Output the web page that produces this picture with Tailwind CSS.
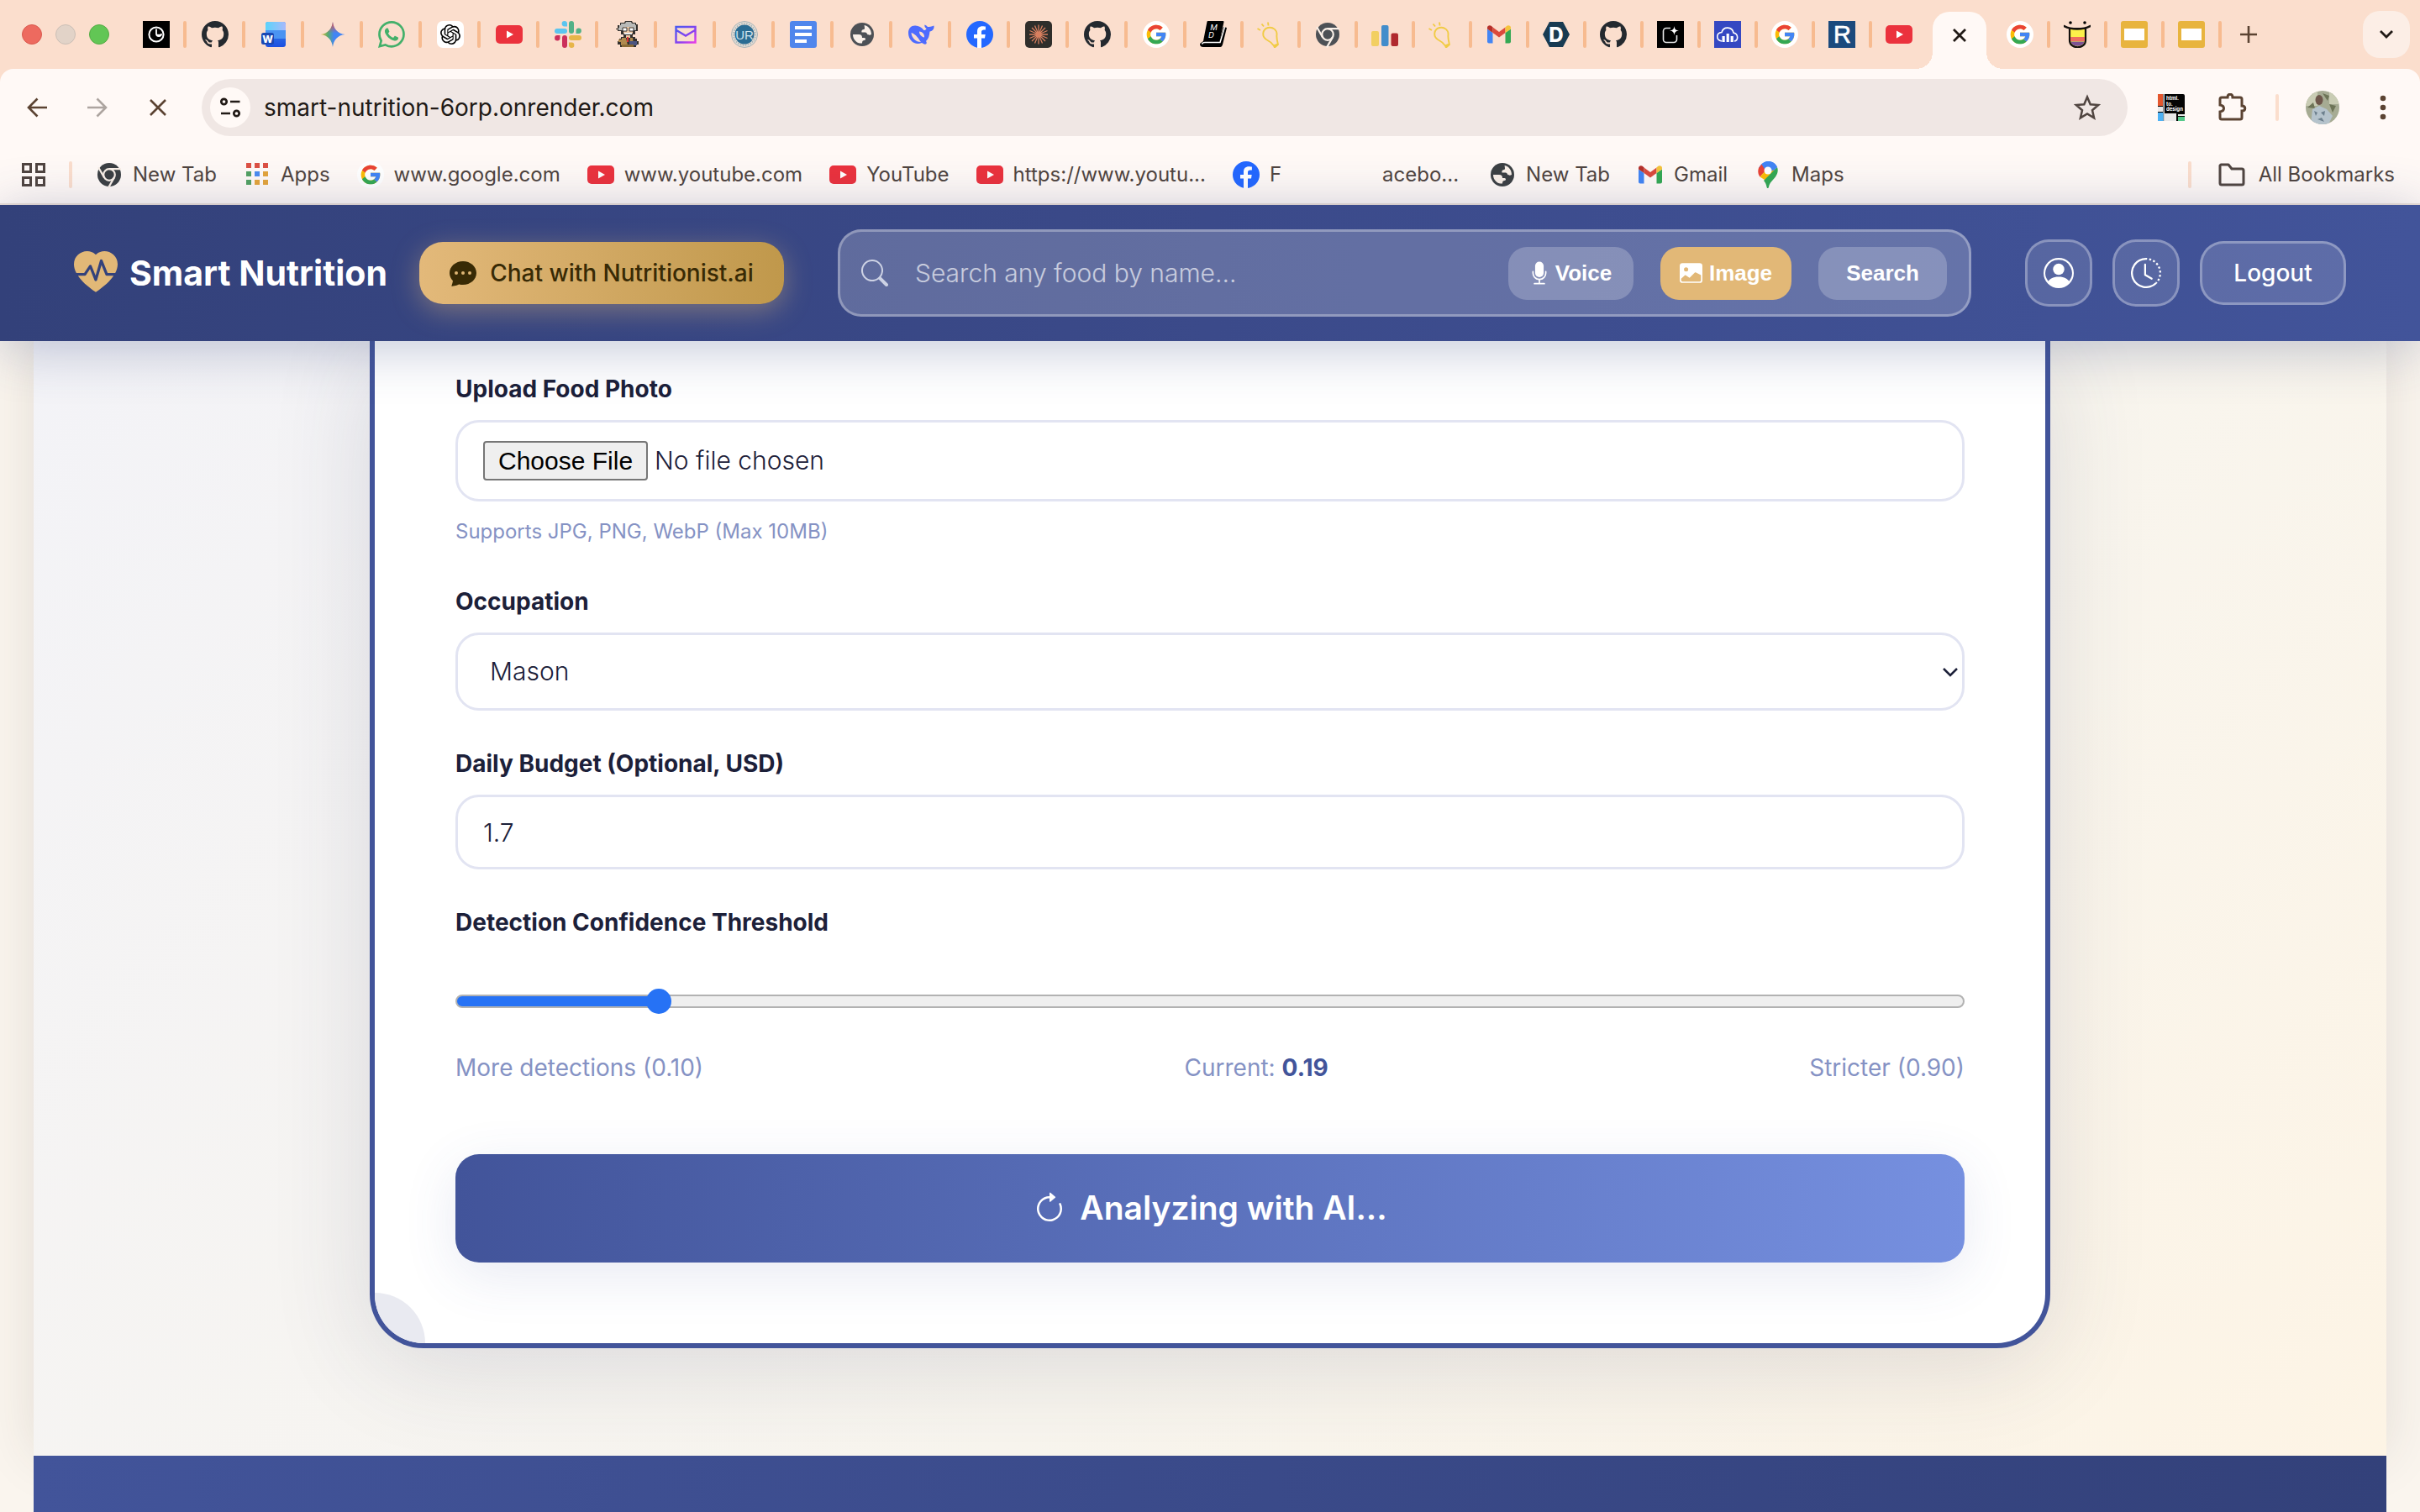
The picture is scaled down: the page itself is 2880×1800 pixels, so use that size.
<!DOCTYPE html>
<html lang="en">
  <head>
    <meta charset="UTF-8" />
    <meta name="viewport" content="width=device-width, initial-scale=1.0" />
    <title>Smart Nutrition</title>
    <script src="https://cdn.jsdelivr.net/npm/@tailwindcss/browser@4"></script>
  </head>
  <body class="flex h-screen flex-col overflow-hidden bg-[#faf5ee] font-[Inter,sans-serif] text-[#1c2039]">
    <!-- Gradients stay in a rendered svg, display:none would switch them off -->
    <svg class="absolute size-0" aria-hidden="true">
      <linearGradient id="g-word" x1="0" y1="0" x2="1" y2="0"><stop offset="0" stop-color="#5ad4fb" /><stop offset="1" stop-color="#a8b9fb" /></linearGradient>
      <linearGradient id="g-word2" x1="0" y1="0" x2="0" y2="1"><stop offset="0" stop-color="#3b8ef0" /><stop offset="1" stop-color="#1c4fe0" /></linearGradient>
      <linearGradient id="g-gem" x1="0" y1=".5" x2="1" y2=".5"><stop offset="0" stop-color="#f0b93a" /><stop offset=".3" stop-color="#58ab6e" /><stop offset=".55" stop-color="#4285f4" /><stop offset="1" stop-color="#4285f4" /></linearGradient>
      <linearGradient id="g-gem2" x1="0" y1="0" x2="0" y2="1"><stop offset="0" stop-color="#ea4b44" /><stop offset=".45" stop-color="#ea4b44" stop-opacity="0" /></linearGradient>
      <linearGradient id="g-mail" x1="0" y1="0" x2="1" y2="1"><stop offset="0" stop-color="#4a5af0" /><stop offset=".6" stop-color="#8a3ff0" /><stop offset="1" stop-color="#e83ce8" /></linearGradient>
    </svg>

    <!-- Icons -->
    <svg class="hidden" aria-hidden="true">
      <symbol id="clock" viewBox="0 0 32 32"><path d="M0 0h32v32H0z" fill="#000" /><circle cx="16" cy="16" r="8.6" fill="none" stroke="#fff" stroke-width="2" /><path d="M16 9.5V15a3 3 0 0 0 6 0" fill="none" stroke="#fff" stroke-width="1.8" /><path d="M16 16.5h5" stroke="#fff" stroke-width="1.4" /></symbol>
      <symbol id="github" viewBox="0 0 16 16"><path fill="#24292f" d="M8 0C3.58 0 0 3.58 0 8c0 3.54 2.29 6.53 5.47 7.59.4.07.55-.17.55-.38 0-.19-.01-.82-.01-1.49-2.01.37-2.53-.49-2.69-.94-.09-.23-.48-.94-.82-1.13-.28-.15-.68-.52-.01-.53.63-.01 1.08.58 1.23.82.72 1.21 1.87.87 2.33.66.07-.52.28-.87.51-1.07-1.78-.2-3.64-.89-3.64-3.95 0-.87.31-1.59.82-2.15-.08-.2-.36-1.02.08-2.12 0 0 .67-.21 2.2.82.64-.18 1.32-.27 2-.27.68 0 1.36.09 2 .27 1.53-1.04 2.2-.82 2.2-.82.44 1.1.16 1.92.08 2.12.51.56.82 1.27.82 2.15 0 3.07-1.87 3.75-3.65 3.95.29.25.54.73.54 1.48 0 1.07-.01 1.93-.01 2.2 0 .21.15.46.55.38A8.013 8.013 0 0 0 16 8c0-4.42-3.58-8-8-8z" /></symbol>
      <symbol id="word" viewBox="0 0 32 32"><rect x="6" y="1" width="24" height="30" rx="3" fill="url(#g-word2)" /><path d="M9 1h18a3 3 0 0 1 3 3v7H6V4a3 3 0 0 1 3-3z" fill="url(#g-word)" /><path d="M6 11h24v10H6z" fill="#4a93f2" /><rect x="1" y="14" width="15" height="14" rx="2.5" fill="#1a48b4" /><text x="8.5" y="25.5" font-family="Inter,sans-serif" font-size="12" font-weight="800" fill="#fff" text-anchor="middle">W</text></symbol>
      <symbol id="gemini" viewBox="0 0 32 32"><path fill="url(#g-gem)" d="M16 1c1 8.500 6 14 14.500 15C22 17 17 22.500 16 31 15 22.500 10 17 1.500 16 10 15 15 9.500 16 1z" /><path fill="url(#g-gem2)" d="M16 1c1 8.500 6 14 14.500 15C22 17 17 22.500 16 31 15 22.500 10 17 1.500 16 10 15 15 9.500 16 1z" /></symbol>
      <symbol id="whatsapp" viewBox="0 0 16 16"><path fill="#43b06a" d="M13.601 2.326A7.85 7.85 0 0 0 7.994 0C3.627 0 .068 3.558.064 7.926c0 1.399.366 2.760 1.057 3.965L0 16l4.204-1.102a7.900 7.900 0 0 0 3.790.965h.004c4.368 0 7.926-3.558 7.930-7.930A7.900 7.900 0 0 0 13.600 2.326zM7.994 14.521a6.600 6.600 0 0 1-3.356-.920l-.240-.144-2.494.654.666-2.433-.156-.251a6.560 6.560 0 0 1-1.007-3.505c0-3.626 2.957-6.584 6.591-6.584a6.560 6.560 0 0 1 4.660 1.931 6.560 6.560 0 0 1 1.928 4.660c-.004 3.639-2.961 6.592-6.592 6.592m3.615-4.934c-.197-.099-1.170-.578-1.353-.646-.182-.065-.315-.099-.445.099-.133.197-.513.646-.627.775-.114.133-.232.148-.430.050-.197-.100-.836-.308-1.592-.985-.590-.525-.985-1.175-1.103-1.372-.114-.198-.011-.304.088-.403.087-.088.197-.232.296-.346.100-.114.133-.198.198-.330.065-.134.034-.248-.015-.347-.050-.099-.445-1.076-.612-1.470-.160-.389-.323-.335-.445-.340-.114-.007-.247-.007-.380-.007a.730.730 0 0 0-.529.247c-.182.198-.691.677-.691 1.654s.710 1.916.810 2.049c.098.133 1.394 2.132 3.383 2.992.470.205.840.326 1.129.418.475.152.904.129 1.246.080.380-.058 1.171-.480 1.338-.943.164-.464.164-.860.114-.943-.049-.084-.182-.133-.380-.232" /></symbol>
      <symbol id="openai" viewBox="0 0 32 32"><rect width="32" height="32" rx="7" fill="#fff" /><g transform="translate(4 4)"><path d="M22.2819 9.8211a5.9847 5.9847 0 0 0-.5157-4.9108 6.0462 6.0462 0 0 0-6.5098-2.9A6.0651 6.0651 0 0 0 4.9807 4.1818a5.9847 5.9847 0 0 0-3.9977 2.9 6.0462 6.0462 0 0 0 .7427 7.0966 5.98 5.98 0 0 0 .511 4.9107 6.051 6.051 0 0 0 6.5146 2.9001A5.9847 5.9847 0 0 0 13.2599 24a6.0557 6.0557 0 0 0 5.7718-4.2058 5.9894 5.9894 0 0 0 3.9977-2.9001 6.0557 6.0557 0 0 0-.7475-7.0729zm-9.022 12.6081a4.4755 4.4755 0 0 1-2.8764-1.0408l.1419-.0804 4.7783-2.7582a.7948.7948 0 0 0 .3927-.6813v-6.7369l2.02 1.1686a.071.071 0 0 1 .038.052v5.5826a4.504 4.504 0 0 1-4.4945 4.4944zm-9.6607-4.1254a4.4708 4.4708 0 0 1-.5346-3.0137l.142.0852 4.783 2.7582a.7712.7712 0 0 0 .7806 0l5.8428-3.3685v2.3324a.0804.0804 0 0 1-.0332.0615L9.74 19.9502a4.4992 4.4992 0 0 1-6.1408-1.6464zM2.3408 7.8956a4.485 4.485 0 0 1 2.3655-1.9728V11.6a.7664.7664 0 0 0 .3879.6765l5.8144 3.3543-2.0201 1.1685a.0757.0757 0 0 1-.071 0l-4.8303-2.7865A4.504 4.504 0 0 1 2.3408 7.872zm16.5963 3.8558L13.1038 8.364 15.1192 7.2a.0757.0757 0 0 1 .071 0l4.8303 2.7913a4.4944 4.4944 0 0 1-.6765 8.1042v-5.6772a.79.79 0 0 0-.407-.667zm2.0107-3.0231l-.142-.0852-4.7735-2.7818a.7759.7759 0 0 0-.7854 0L9.409 9.2297V6.8974a.0662.0662 0 0 1 .0284-.0615l4.8303-2.7866a4.4992 4.4992 0 0 1 6.6802 4.66zM8.3065 12.863l-2.02-1.1638a.0804.0804 0 0 1-.038-.0567V6.0742a4.4992 4.4992 0 0 1 7.3757-3.4537l-.142.0805L8.704 5.459a.7948.7948 0 0 0-.3927.6813zm1.0976-2.3654l2.602-1.4998 2.6069 1.4998v2.9994l-2.5974 1.4997-2.6067-1.4997Z" /></g></symbol>
      <symbol id="youtube" viewBox="0 0 32 32"><rect y="5" width="32" height="22" rx="5" fill="#eb323d" /><path d="M13 11.500v9l8-4.500z" fill="#fff" /></symbol>
      <symbol id="slack" viewBox="0 0 32 32"><g fill="#5bc5ef"><rect y="9" width="15" height="6" rx="3" /><path d="M15 6.500h-3a3.200 3.200 0 1 1 3-3z" /></g><g fill="#52b187"><rect x="17" width="6" height="15" rx="3" /><path d="M25.500 15v-3a3.200 3.200 0 1 1 3 3z" /></g><g fill="#e7b549"><rect x="17" y="17" width="15" height="6" rx="3" /><path d="M17 25.500h3a3.200 3.200 0 1 1-3 3z" /></g><g fill="#cb2f5b"><rect x="9" y="17" width="6" height="15" rx="3" /><path d="M6.500 17v3a3.200 3.200 0 1 1-3-3z" /></g></symbol>
      <symbol id="professor" viewBox="0 0 32 32"><path d="M8 2h5l1-2h8l1 2h4v2h2v8h-3v4h-3v3h3v2h2v3h2v4h-3v3H8v-3H5v-4h2v-3h2v-2h3v-3H9v-4H5v-2H3V9h2V5h3z" fill="#33302d" /><path d="M9 3h5l1-2h6l1 2h4v2h1v6h-3l-1-3H12l-1 3H6V8h1V5h2z" fill="#b9bab8" /><path d="M12 7h11v8H12z" fill="#efc9a4" /><path d="M11 8h5v4h-5zm8 0h5v4h-5z" fill="#fff" stroke="#333" stroke-width="1" /><path d="M13 14h9v2h-9z" fill="#eee" /><path d="M15 17h5v3h-5z" fill="#efc9a4" /><path d="M10 20h5l2 9h-8v-4H6v-3h4z" fill="#b08a4e" /><path d="M20 20h3l1 9h-5z" fill="#b08a4e" /><path d="M16 19h2v6h-2z" fill="#d33" /><path d="M19 24h9v5h-9z" fill="#4c5580" /><path d="M10 28h14v3H10z" fill="#8a6b35" /></symbol>
      <symbol id="mail" viewBox="0 0 32 32"><path d="M4.500 7h23v18.500h-23zM5 11l11 6.500L27 11" fill="none" stroke="url(#g-mail)" stroke-width="2.400" /></symbol>
      <symbol id="university" viewBox="0 0 32 32"><circle cx="16" cy="16" r="15.500" fill="#e6ddd3" stroke="#a9b4b8" stroke-width="1" /><circle cx="16" cy="16" r="13" fill="none" stroke="#9fb0b8" stroke-width="1.500" stroke-dasharray="1.500 1.500" /><circle cx="16" cy="16" r="11.500" fill="#2a6c93" /><text x="16" y="21.500" font-family="Liberation Sans,sans-serif" font-size="15" fill="#cfe2ec" text-anchor="middle">UR</text></symbol>
      <symbol id="docs" viewBox="0 0 32 32"><rect width="32" height="32" rx="3" fill="#5086ec" /><path d="M6 6h20v4H6zm0 8h20v4H6zm0 8h14v4H6z" fill="#fff" /></symbol>
      <symbol id="globe" viewBox="0 0 32 32"><circle cx="16" cy="16" r="14" fill="currentColor" /><path class="fill-[#faf0e8]" d="M18 5c5 .5 9 5 9 11-1.500 1-4 1-5-.5-.5-1.500-1.500-2-3-2h-3.500c-.5-2 .5-3.500 2.500-3.500 1.500-.5 1-2 .5-5zM5 16h7c3 0 4 1.500 4 4h2.500c2 0 2 3 0 3-1.500 0-2.500.5-2.500 3.500C9.500 27 5 22 5 16z" /></symbol>
      <symbol id="whale" viewBox="0 0 32 32"><path d="M1 14C1 8.500 5 5 9.500 5.500c4 .5 7 1.500 10 5.500 1.500 0 2.500-.5 3-2-2-1.500-2.500-3-2-4.500 1.500.5 2.500 1.500 3.500 2.500 2 0 4.500-.5 7.500-1.500.5 4-1.500 6.500-5 7-.5 5-1.500 9-4.500 11.500 1 1.500 1 2.500 0 3.500-2 .5-3.500-.5-5-1.500C9 29.500 1 23.500 1 14z" fill="#4d6bfe" /><path d="M4.500 14c3 1 5 2.500 7 5 2 2 3 4.500 4.500 6C9.500 25 5 20 4.500 14zM14 12.500c3.500 0 6.500 3 6 7-3-.5-6-3-6-7z" fill="#fbdecd" /></symbol>
      <symbol id="facebook" viewBox="0 0 32 32"><circle cx="16" cy="16" r="16" fill="#2468ff" /><path d="m22 20.500.7-4.500H18v-3c0-1.300.9-2.500 2.900-2.500h2V6.600s-2-.3-3.700-.3c-3.800 0-6.200 2.200-6.200 6.200V16H9v4.500h4V32h5V20.500z" fill="#fff" /></symbol>
      <symbol id="burst" viewBox="0 0 32 32"><rect width="32" height="32" rx="5" fill="#2f2e2b" /><path d="M16 4.500v23M5 16h22M8 8l16 16M24 8 8 24M11.500 5.500l9 21M20.500 5.500l-9 21M5.500 11.500l21 9M5.500 20.500l21-9" stroke="#d97f5f" stroke-width="1.300" /></symbol>
      <symbol id="google" viewBox="0 0 48 48"><circle cx="24" cy="24" r="24" fill="#fff" /><g transform="translate(3.600 3.600) scale(.85)"><path fill="#fbbc05" d="M43.611 20.083H42V20H24v8h11.303c-1.649 4.657-6.080 8-11.303 8-6.627 0-12-5.373-12-12s5.373-12 12-12c3.059 0 5.842 1.154 7.961 3.039l5.657-5.657C34.046 6.053 29.268 4 24 4 12.955 4 4 12.955 4 24s8.955 20 20 20 20-8.955 20-20c0-1.341-.138-2.650-.389-3.917z" /><path fill="#ea4335" d="m6.306 14.691 6.571 4.819C14.655 15.108 18.961 12 24 12c3.059 0 5.842 1.154 7.961 3.039l5.657-5.657C34.046 6.053 29.268 4 24 4 16.318 4 9.656 8.337 6.306 14.691z" /><path fill="#34a853" d="M24 44c5.166 0 9.860-1.977 13.409-5.192l-6.190-5.238C29.211 35.091 26.715 36 24 36c-5.202 0-9.619-3.317-11.283-7.946l-6.522 5.025C9.505 39.556 16.227 44 24 44z" /><path fill="#4285f4" d="M43.611 20.083H42V20H24v8h11.303a12.040 12.040 0 0 1-4.087 5.571l6.193 5.236C36.971 39.205 44 34 44 24c0-1.341-.138-2.650-.389-3.917z" /></g></symbol>
      <symbol id="mdbook" viewBox="0 0 32 32"><path d="M9.500 1H27.500L22.500 24H5z" fill="#000" stroke="#000" stroke-width="2" stroke-linejoin="round" /><path d="M28 7l4 1-5 20c-.5 1.500-1 3-3 3H4c-3 0-4-1.500-4-4l4-3h19z" fill="#000" /><path d="M2.500 27.500c.5-2 2-2 3.500-2h18L29.500 7" fill="none" stroke="#fff" stroke-width="1.500" /><text x="16.500" y="11" font-family="Inter,sans-serif" font-size="9.500" font-style="italic" fill="#fff" text-anchor="middle">M</text><text x="13.500" y="20" font-family="Inter,sans-serif" font-size="9.500" font-style="italic" fill="#fff" text-anchor="middle">D</text></symbol>
      <symbol id="bulb" viewBox="0 0 32 32"><path d="M20 28.500c-3-4-6-6-9-7.500-5.500-3.500-5-12 2-14 6-1.500 11 3 10.500 8.500-.5 4 .5 7.500 1.500 11.500l-4 3.500zM20 28.500l5-2M4 10 .5 8M8 5.500 5.500 2.500M13.500 4.500 13 .5" transform="translate(0 1)" fill="none" stroke="#f1cb45" stroke-width="1.900" stroke-linejoin="round" /></symbol>
      <symbol id="chrome" viewBox="0 0 32 32"><circle cx="16" cy="16" r="14" fill="currentColor" /><g class="stroke-[#faf0e8]" fill="none" stroke-width="2.200"><circle cx="16" cy="16" r="6.800" /><path d="M16 9.200h14M10.100 19.400l-7-12.200M21.900 19.400l-7 12.200" /></g></symbol>
      <symbol id="bars" viewBox="0 0 32 32"><rect y="12" width="9" height="18" rx="2" fill="#f2cf62" /><rect x="12" y="5" width="8.500" height="25" rx="2" fill="#428dcb" /><rect x="23.500" y="14.500" width="8.500" height="15.500" rx="2" fill="#b0292e" /></symbol>
      <symbol id="gmail" viewBox="0 0 32 32"><path fill="#4285f4" d="M2 9.500 8.500 14v12.500H4a2 2 0 0 1-2-2z" /><path fill="#34a853" d="M30 9.500 23.500 14v12.500H28a2 2 0 0 0 2-2z" /><path fill="#db4a3c" d="M8.500 7.500 16 13l7.500-5.500V14L16 19.500 8.500 14z" /><path fill="#b5302a" d="M2 8c0-2.500 3-3.500 5-2l1.500 1.500V14L2 9.500z" /><path fill="#f5c33b" d="M30 8c0-2.500-3-3.500-5-2l-1.500 1.500V14L30 9.500z" /></symbol>
      <symbol id="dhex" viewBox="0 0 32 32"><path d="M8 1h16l8 15-8 15H8L0 16z" fill="#183b52" /><text x="16" y="25" font-family="Inter,sans-serif" font-size="24" font-weight="800" fill="#fff" text-anchor="middle">D</text></symbol>
      <symbol id="sparkbox" viewBox="0 0 32 32"><path d="M0 0h32v32H0z" fill="#000" /><path d="M16 8.500h-5A3.500 3.500 0 0 0 7.500 12v10a3.500 3.500 0 0 0 3.500 3.500h9a3.500 3.500 0 0 0 3.500-3.500v-5" fill="none" stroke="#e8e8e8" stroke-width="1.600" /><path d="M20.500 6c.5 3.500 1.500 5 5.500 5.500-4 .5-5 2-5.500 5.500-.5-3.500-1.500-5-5.500-5.500 4-.5 5-2 5.500-5.500z" fill="#fff" /></symbol>
      <symbol id="cloud" viewBox="0 0 32 32"><path d="M0 0h32v32H0z" fill="#3548c2" /><path d="M9 24c-7-1-7-10 0-10.500C11 6 21.500 6.500 23 14c6 1.500 6 9 1 10" fill="none" stroke="#fff" stroke-width="1.600" /><path d="M9.500 18h3.200v7H9.500zm5.100-3h3.200v10h-3.200zm5 3h3.200v7h-3.200z" fill="#fff" /></symbol>
      <symbol id="rbox" viewBox="0 0 32 32"><path d="M0 0h32v32H0z" fill="#1b4a7d" /><text x="16.500" y="26" font-family="Liberation Sans,sans-serif" font-size="29" fill="#fff" stroke="#fff" stroke-width=".6" text-anchor="middle">R</text></symbol>
      <symbol id="tongue" viewBox="0 0 32 32"><circle cx="8" cy="2" r="1.800" /><circle cx="25" cy="2" r="1.800" /><path d="M7 9h19v14c0 11-19 11-19 0z" fill="#fdf04a" stroke="#14110f" stroke-width="2.200" /><path d="M8 19h17v5H8z" fill="#ee6d60" /><path d="M8.500 24.500h16c-1 7-15 7-16 0z" fill="#7c5294" /><path d="M.5 6C9 10.500 23 10.500 31.500 6" fill="none" stroke="#14110f" stroke-width="2.500" stroke-linecap="round" /></symbol>
      <symbol id="slides" viewBox="0 0 32 32"><rect width="32" height="32" rx="3" fill="#e8b43e" /><path d="M4 9h24v14H4z" fill="#fff" /></symbol>
      <symbol id="appgrid" viewBox="0 0 32 32"><path d="M3 2h6v6H3zm10 0h6v6h-6zm10 0h6v6h-6z" fill="#dd5144" /><path d="M3 12h6v6H3zm0 10h6v6H3z" fill="#53a163" /><path d="M13 12h6v6h-6z" fill="#4b8cf0" /><path d="M23 12h6v6h-6zm0 10h6v6h-6zm-10 0h6v6h-6z" fill="#e3a43b" /></symbol>
      <symbol id="maps" viewBox="0 0 32 32"><path d="M5 8C8 2 13 0 16 0c5 0 9 2.500 11 7l-11 12z" fill="#4285f4" /><path d="M5 8c-1.500 4-.5 8 1.500 10.500L16 8 8.500 3.500z" fill="#ea4335" /><path d="M6.500 18.500 20 3l4 12-9 9z" fill="#fbbc05" /><path d="M27 7c1.500 4 .5 8-2 11.500-4 5-7 7-8 12-.5 2-2 2-2.500 0-.5-3-1.500-5-3.500-7.500z" fill="#34a853" /><path d="M8.500 3.500C11 1 14 0 16 0c5 0 9 2.500 11 7l-7 5-7-1z" fill="#4285f4" /><circle cx="16" cy="11" r="4.500" fill="#fff" /></symbol>
    </svg>

    <!-- Tab strip -->
    <div class="flex h-[82px] shrink-0 items-center bg-[#fbdecd]">
      <div class="mr-[22px] ml-[26px] flex shrink-0 gap-4">
        <span class="size-6 rounded-full border border-[#d9594e] bg-[#ed6a5f]"></span>
        <span class="size-6 rounded-full border border-[#cbbfb6] bg-[#e2d3c8]"></span>
        <span class="size-6 rounded-full border border-[#55ab45] bg-[#62c655]"></span>
      </div>
      <div id="tabs-left" class="flex shrink-0"></div>
      <div class="relative ml-1 flex h-[68px] w-16 shrink-0 items-center justify-center self-end rounded-t-[20px] bg-[#fff9f6]">
        <span class="absolute bottom-0 -left-5 size-5 bg-[radial-gradient(circle_at_0_0,transparent_20px,#fff9f6_20px)]"></span>
        <span class="absolute -right-5 bottom-0 size-5 bg-[radial-gradient(circle_at_100%_0,transparent_20px,#fff9f6_20px)]"></span>
        <button aria-label="Close tab" class="pb-3">
          <svg class="size-4" viewBox="0 0 16 16" fill="none" stroke="#211a16" stroke-width="2.800"><path d="m1 1 14 14M15 1 1 15" /></svg>
        </button>
      </div>
      <div id="tabs-right" class="ml-2 flex shrink-0"></div>
      <button aria-label="New tab" class="flex w-16 shrink-0 justify-center">
        <svg class="size-5" viewBox="0 0 20 20" stroke="#5b4332" stroke-width="2.600"><path d="M10 0v20M0 10h20" /></svg>
      </button>
      <button aria-label="Search tabs" class="mr-3 ml-auto flex size-14 items-center justify-center rounded-[20px] bg-[#fceee6]">
        <svg class="size-4" viewBox="0 0 16 16" fill="none" stroke="#211a16" stroke-width="2.800"><path d="m1 4 7 7 7-7" /></svg>
      </button>
    </div>

    <!-- Toolbar -->
    <div class="shrink-0 bg-[#fbdecd]">
      <div class="flex h-[92px] items-center rounded-t-2xl bg-[#fff9f6] pl-2">
        <button aria-label="Back" class="flex w-[72px] shrink-0 justify-center"><svg class="size-6" viewBox="0 0 24 24" fill="none" stroke="#5b4332" stroke-width="2.600"><path d="M24 12H2M12.500 1.500 2 12l10.500 10.500" /></svg></button>
        <button aria-label="Forward" class="flex w-[72px] shrink-0 justify-center"><svg class="size-6" viewBox="0 0 24 24" fill="none" stroke="#ada5a0" stroke-width="2.600"><path d="M0 12h22M11.500 1.500 22 12 11.500 22.500" /></svg></button>
        <button aria-label="Stop" class="flex w-[72px] shrink-0 justify-center"><svg class="size-5" viewBox="0 0 20 20" fill="none" stroke="#5b4332" stroke-width="2.600"><path d="m1 1 18 18M19 1 1 19" /></svg></button>
        <div class="ml-4 flex h-[68px] min-w-0 flex-1 items-center rounded-full bg-[#f0e7e4] pr-8 pl-[10px]">
          <span class="mr-4 flex size-12 shrink-0 items-center justify-center rounded-full bg-[#fff9f6]">
            <svg class="size-6" viewBox="0 0 24 24" fill="none" stroke="#211a16" stroke-width="2.700"><circle cx="4.500" cy="5" r="3.200" /><path d="M12 5h11.500M1 19h11" /><circle cx="19.500" cy="19" r="3.200" /></svg>
          </span>
          <input aria-label="Address" value="smart-nutrition-6orp.onrender.com" class="min-w-0 flex-1 bg-transparent text-[28px] text-[#211a16] outline-none" />
          <button aria-label="Bookmark this tab"><svg class="size-8" viewBox="0 0 32 32" fill="none" stroke="#504540" stroke-width="2.500"><path d="m16 3.500 3.700 8.700 9.400.8-7.100 6.200 2.100 9.200-8.100-4.900-8.100 4.900L10 19.200 2.900 13l9.400-.8z" /></svg></button>
        </div>
        <svg class="ml-9 size-8 shrink-0" viewBox="0 0 32 32"><rect width="32" height="32" rx="2" fill="#050505" /><path d="M0 0h6v14H0z" fill="#e4572e" /><path d="M0 15h6v6H0zm8 8h14v9H8z" fill="#e8e8e8" /><path d="M6.500 0h1.300v32H6.500z" fill="#fff" /><path d="M0 22h6.500v10H0z" fill="#4db2f5" /><path d="M24 24h8v2h-8z" fill="#e8e8e8" /><path d="M24 27h8v5h-8z" fill="#55c98a" /><g font-family="Inter,sans-serif" font-size="6" font-weight="700" fill="#fff"><text x="10" y="7">html.</text><text x="10" y="13.500">to.</text><text x="10" y="20">design</text></g></svg>
        <button aria-label="Extensions" class="ml-10 shrink-0"><svg class="size-[34px]" viewBox="0 0 34 34" fill="none" stroke="#5b4332" stroke-width="3"><path d="M4 5h7c0-5 6-5 6 0h9a2 2 0 0 1 2 2v8c5 0 5 6 0 6v8a2 2 0 0 1-2 2H4a2 2 0 0 1-2-2v-7c6-1 6-7 0-8V7a2 2 0 0 1 2-2z" /></svg></button>
        <span class="mr-8 ml-[34px] h-8 w-1 shrink-0 rounded bg-[#fbdecd]"></span>
        <svg class="size-10 shrink-0 rounded-full" viewBox="0 0 40 40"><path d="M0 0h40v40H0z" fill="#a6ab93" /><path d="M0 0h14v18H0zm28 2h12v14H28z" fill="#c9ccb4" /><path d="M20 3l8 3-2 6zM2 20l7-6 2 7zM28 16l8 2-4 8z" fill="#6d7457" /><ellipse cx="16" cy="11" rx="4.500" ry="6" fill="#6e564b" /><path d="M6 40 8 22l8-4 9 4 7 8-5 10z" fill="#b5c3cc" /><path d="m10 24 4 2-2 4zm8 2 5-2-1 6zm-4 8 5-2 3 5z" fill="#6c7f8d" /></svg>
        <button aria-label="Menu" class="flex w-24 shrink-0 justify-center pl-2"><svg class="h-8 w-2" viewBox="0 0 8 32" fill="#5b4332"><circle cx="4" cy="5" r="3.300" /><circle cx="4" cy="16" r="3.300" /><circle cx="4" cy="27" r="3.300" /></svg></button>
      </div>
    </div>

    <!-- Bookmarks bar -->
    <div class="flex h-[70px] shrink-0 items-center gap-8 border-b-2 border-[#ece0d8] bg-[#fff9f6] pr-[30px] pl-[26px] text-2xl whitespace-nowrap text-[#504540]">
      <svg class="size-7 shrink-0" viewBox="0 0 28 28" fill="none" stroke="#504540" stroke-width="3"><path d="M1.500 1.500h9v9h-9zm16 0h9v9h-9zm-16 16h9v9h-9zm16 0h9v9h-9z" /></svg>
      <span class="-mx-1 h-8 w-1 rounded bg-[#fbdecd]"></span>
      <a href="#" class="flex items-center gap-3"><svg class="size-8 text-[#3c4043]"><use href="#chrome" /></svg>New Tab</a>
      <a href="#" class="flex items-center gap-3"><svg class="size-8"><use href="#appgrid" /></svg>Apps</a>
      <a href="#" class="flex items-center gap-3"><svg class="size-8"><use href="#google" /></svg>www.google.com</a>
      <a href="#" class="flex items-center gap-3"><svg class="size-8"><use href="#youtube" /></svg>www.youtube.com</a>
      <a href="#" class="flex items-center gap-3"><svg class="size-8"><use href="#youtube" /></svg>YouTube</a>
      <a href="#" class="flex items-center gap-3"><svg class="size-8"><use href="#youtube" /></svg>https://www.youtu...</a>
      <a href="#" class="mr-1 flex items-center gap-3"><svg class="size-8"><use href="#facebook" /></svg><span>F</span><span class="ml-[108px]">acebo...</span></a>
      <a href="#" class="flex items-center gap-3"><svg class="size-8 text-[#3c4043]"><use href="#globe" /></svg>New Tab</a>
      <a href="#" class="flex items-center gap-3"><svg class="size-8"><use href="#gmail" /></svg>Gmail</a>
      <a href="#" class="flex items-center gap-3"><svg class="size-8"><use href="#maps" /></svg>Maps</a>
      <span class="ml-auto h-8 w-1 rounded bg-[#fbdecd]"></span>
      <button class="flex items-center gap-4"><svg class="h-7 w-8" viewBox="0 0 32 28" fill="none" stroke="#504540" stroke-width="3" stroke-linejoin="round"><path d="M3 2h9l4 5h12a2 2 0 0 1 2 2v15a2 2 0 0 1-2 2H4a2 2 0 0 1-2-2V3z" /></svg>All Bookmarks</button>
    </div>

    <!-- Header -->
    <header class="relative z-10 flex h-[162px] shrink-0 items-center bg-linear-to-r from-[#33417a] via-[#3b4a8a] to-[#42549a] px-[88px] shadow-[0_8px_64px_rgba(51,65,122,0.3)]">
      <a href="#" class="flex shrink-0 items-center gap-[14px] text-[41px] leading-none font-bold text-white">
        <svg class="size-[52px]" viewBox="0 0 16 16" fill="#e2b877"><path d="M1.475 9C2.702 10.840 4.779 12.871 8 15c3.221-2.129 5.298-4.160 6.525-6H12a.5.5 0 0 1-.464-.314l-1.457-3.642-1.598 5.593a.5.5 0 0 1-.945.049L5.889 6.568l-1.473 2.210A.5.5 0 0 1 4 9z" /><path d="M.880 8C-2.427 1.680 4.410-2 7.823 1.143q.090.083.176.171a3 3 0 0 1 .176-.170C11.590-2 18.426 1.680 15.120 8h-2.783l-1.874-4.686a.5.5 0 0 0-.945.049L7.921 8.956 6.464 5.314a.5.5 0 0 0-.880-.091L3.732 8z" /></svg>
        Smart Nutrition
      </a>
      <a href="#" class="ml-[38px] flex h-[74px] w-[434px] shrink-0 items-center justify-center gap-4 rounded-[28px] bg-linear-to-r from-[#e3b97a] to-[#c0984b] text-[28px] font-medium whitespace-nowrap text-[#382a05] shadow-[0_8px_32px_rgba(227,185,122,0.4)]">
        <svg class="size-8" viewBox="0 0 16 16" fill="#382a05"><path d="M16 8c0 3.866-3.582 7-8 7a9 9 0 0 1-2.347-.306c-.584.296-1.925.864-4.181 1.234-.2.032-.352-.176-.273-.362.354-.836.674-1.950.770-2.966C.744 11.370 0 9.760 0 8c0-3.866 3.582-7 8-7s8 3.134 8 7M5 8a1 1 0 1 0-2 0 1 1 0 0 0 2 0m4 0a1 1 0 1 0-2 0 1 1 0 0 0 2 0m3 1a1 1 0 1 0 0-2 1 1 0 0 0 0 2" /></svg>
        Chat with Nutritionist.ai
      </a>
      <form class="mx-16 flex h-[104px] min-w-0 flex-1 items-center gap-8 rounded-[28px] border-[3px] border-white/30 bg-white/20 pr-[26px] pl-[25px]">
        <svg class="size-8 shrink-0" viewBox="0 0 16 16" fill="#cdd2e4"><path d="M11.742 10.344a6.500 6.500 0 1 0-1.397 1.398h-.001q.044.060.098.115l3.850 3.850a1 1 0 0 0 1.415-1.414l-3.850-3.850a1 1 0 0 0-.115-.100zM12 6.500a5.500 5.500 0 1 1-11 0 5.500 5.500 0 0 1 11 0" /></svg>
        <input aria-label="Search food" type="text" placeholder="Search any food by name..." class="min-w-0 flex-1 bg-transparent text-[30px] font-light text-white outline-none placeholder:text-white/65" />
        <button type="button" class="flex h-[63px] w-[149px] items-center justify-center gap-2 rounded-[22px] bg-white/[.22] font-['Liberation_Sans',sans-serif] text-[26px] font-bold text-white">
          <svg class="h-7 w-[22px]" viewBox="1.500 0 13 16" fill="#fff"><path d="M5 3a3 3 0 0 1 6 0v5a3 3 0 0 1-6 0z" /><path d="M3.500 6.500A.5.5 0 0 1 4 7v1a4 4 0 0 0 8 0V7a.5.5 0 0 1 1 0v1a5 5 0 0 1-4.500 4.975V15h3a.5.5 0 0 1 0 1h-7a.5.5 0 0 1 0-1h3v-2.025A5 5 0 0 1 3 8V7a.5.5 0 0 1 .5-.5" /></svg>Voice
        </button>
        <button type="button" class="flex h-[63px] w-[156px] items-center justify-center gap-2 rounded-[22px] bg-[#e2b877] font-['Liberation_Sans',sans-serif] text-[26px] font-bold text-white">
          <svg class="h-7 w-[27px]" viewBox="0 0 16 16" fill="#fff"><path d="M.002 3a2 2 0 0 1 2-2h12a2 2 0 0 1 2 2v10a2 2 0 0 1-2 2h-12a2 2 0 0 1-2-2zm1 9v1a1 1 0 0 0 1 1h12a1 1 0 0 0 1-1V9.500l-3.777-1.947a.5.5 0 0 0-.577.093l-3.710 3.710-2.660-1.772a.5.5 0 0 0-.630.062zm5-6.500a1.500 1.500 0 1 0-3 0 1.500 1.500 0 0 0 3 0" /></svg>Image
        </button>
        <button type="button" class="h-[63px] w-[153px] rounded-[22px] bg-white/[.22] font-['Liberation_Sans',sans-serif] text-[26px] font-bold text-white">Search</button>
      </form>
      <div class="flex shrink-0 items-center gap-6">
        <button aria-label="Profile" class="flex size-20 items-center justify-center rounded-[28px] border-[3px] border-white/30 bg-white/[.12]">
          <svg class="size-9" viewBox="0 0 16 16" fill="#fff"><path d="M11 6a3 3 0 1 1-6 0 3 3 0 0 1 6 0" /><path fill-rule="evenodd" d="M0 8a8 8 0 1 1 16 0A8 8 0 0 1 0 8m8-7a7 7 0 0 0-5.468 11.370C3.242 11.226 4.805 10 8 10s4.757 1.225 5.468 2.370A7 7 0 0 0 8 1" /></svg>
        </button>
        <button aria-label="History" class="flex size-20 items-center justify-center rounded-[28px] border-[3px] border-white/30 bg-white/[.12]">
          <svg class="size-9" viewBox="0 0 16 16" fill="#fff"><path d="M8.515 1.019A7 7 0 0 0 8 1V0a8 8 0 0 1 .589.022zm2.004.450a7 7 0 0 0-.985-.299l.219-.976q.576.129 1.126.342zm1.370.710a7 7 0 0 0-.439-.270l.493-.870a8 8 0 0 1 .979.654l-.615.789a7 7 0 0 0-.418-.302zm1.834 1.790a7 7 0 0 0-.653-.796l.724-.690q.406.429.747.910zm.744 1.352a7 7 0 0 0-.214-.468l.893-.450a8 8 0 0 1 .450 1.088l-.950.313a7 7 0 0 0-.179-.483m.530 2.507a7 7 0 0 0-.100-1.025l.985-.170q.100.580.116 1.170zm-.131 1.538q.050-.254.081-.510l.993.123a8 8 0 0 1-.230 1.155l-.964-.267q.069-.247.120-.501m-.952 2.379q.276-.436.486-.908l.914.405q-.240.540-.555 1.038zm-.964 1.205q.183-.183.350-.378l.758.653a8 8 0 0 1-.401.432z" /><path d="M8 1a7 7 0 1 0 4.950 11.950l.707.707A8.001 8.001 0 1 1 8 0z" /><path d="M7.500 3a.5.5 0 0 1 .5.5v5.210l3.248 1.856a.5.5 0 0 1-.496.868l-3.500-2A.5.5 0 0 1 7 9V3.500a.5.5 0 0 1 .5-.5" /></svg>
        </button>
        <button class="h-[76px] w-[174px] rounded-[28px] border-[3px] border-white/30 bg-white/15 text-[28px] font-medium text-white">Logout</button>
      </div>
    </header>

    <!-- Analyzer form -->
    <main class="mx-10 flex shrink-0 justify-center bg-linear-135 from-[#f3f3f7] via-[#f8f5ee] via-60% to-[#fdf4e5] pb-32 shadow-[0_0_60px_rgba(60,50,40,0.12)]">
      <form class="relative w-full max-w-[2000px] overflow-hidden rounded-b-[64px] border-6 border-t-0 border-[#42549a] bg-white px-24 pt-[37px] pb-24 shadow-[0_20px_120px_rgba(50,60,90,0.14)]">
        <span class="absolute -bottom-[60px] -left-[60px] size-[120px] rounded-full bg-[#e9eaf1]"></span>

        <label for="photo" class="mb-[17px] block text-[28px] leading-10 font-bold">Upload Food Photo</label>
        <input id="photo" type="file" class="block h-[97px] w-full rounded-[28px] border-[3px] border-[#e2e4f2] px-[30px] pt-[22px] text-[30px] leading-[43px] font-light file:mr-2 file:h-[47px] file:rounded file:border-2 file:border-solid file:border-[#767676] file:bg-[#efefef] file:px-4 file:font-['Liberation_Sans',sans-serif] file:text-[30px] file:font-normal file:text-black" />
        <p class="mt-4 text-2xl leading-10 text-[#8592c4]">Supports JPG, PNG, WebP (Max 10MB)</p>

        <label for="occupation" class="mt-[43px] mb-[17px] block text-[28px] leading-10 font-bold">Occupation</label>
        <div class="relative">
          <select id="occupation" class="block h-[93px] w-full appearance-none rounded-[28px] border-[3px] border-[#e2e4f2] bg-white px-[38px] text-[30px] font-light">
            <option>Mason</option>
          </select>
          <svg class="pointer-events-none absolute top-1/2 right-2 size-[18px] -translate-y-1/2" viewBox="0 0 18 18" fill="none" stroke="#1c2039" stroke-width="2.500"><path d="m1 5 8 8 8-8" /></svg>
        </div>

        <label for="budget" class="mt-[43px] mb-[17px] block text-[28px] leading-10 font-bold">Daily Budget (Optional, USD)</label>
        <input id="budget" type="text" inputmode="decimal" value="1.7" class="block h-[89px] w-full rounded-[28px] border-[3px] border-[#e2e4f2] px-[30px] text-[30px] font-light" />

        <label for="confidence" class="mt-[43px] block text-[28px] leading-10 font-bold">Detection Confidence Threshold</label>
        <input id="confidence" type="range" min="0.1" max="0.9" step="0.001" value="0.202" class="mt-[58px] block h-8 w-full appearance-none bg-transparent [&::-webkit-slider-runnable-track]:h-4 [&::-webkit-slider-runnable-track]:rounded-full [&::-webkit-slider-runnable-track]:border-2 [&::-webkit-slider-runnable-track]:border-[#b2b2b2] [&::-webkit-slider-runnable-track]:bg-[#efefef] [&::-webkit-slider-runnable-track]:bg-[linear-gradient(to_right,#2672f5_13%,transparent_13%)] [&::-webkit-slider-runnable-track]:bg-origin-border [&::-webkit-slider-thumb]:-mt-[9px] [&::-webkit-slider-thumb]:size-[30px] [&::-webkit-slider-thumb]:appearance-none [&::-webkit-slider-thumb]:rounded-full [&::-webkit-slider-thumb]:bg-[#2672f5]" />
        <div class="mt-[43px] flex justify-between text-[28px] leading-10 text-[#8592c4]">
          <span>More detections (0.10)</span>
          <span>Current: <strong class="font-bold text-[#42549a]">0.19</strong></span>
          <span>Stricter (0.90)</span>
        </div>

        <button type="submit" class="mt-[83px] flex h-[129px] w-full items-center justify-center gap-4 rounded-[28px] bg-linear-to-r from-[#42549a] to-[#7690e0] text-[39px] font-semibold text-white shadow-[0_16px_64px_rgba(66,84,154,0.12)]">
          <svg class="size-10" viewBox="0 0 16 16" fill="#fff"><path d="M8 3a5 5 0 1 0 4.546 2.914.5.5 0 0 1 .908-.417A6 6 0 1 1 8 2z" /><path d="M8 4.466V.534a.250.250 0 0 1 .410-.192l2.360 1.966c.120.100.120.284 0 .384L8.410 4.658A.250.250 0 0 1 8 4.466" /></svg>
          Analyzing with AI...
        </button>
      </form>
    </main>

    <!-- Footer -->
    <footer class="relative mx-10 flex-1 bg-linear-to-r from-[#42549a] to-[#33417a]"></footer>

    <script>
      const wideTabs = ['clock', 'github', 'word', 'gemini', 'whatsapp', 'openai', 'youtube', 'slack', 'professor', 'mail', 'university', 'docs', 'globe', 'whale', 'facebook', 'burst', 'github', 'google'];
      const narrowTabs = ['mdbook', 'bulb', 'chrome', 'bars', 'bulb', 'gmail', 'dhex', 'github', 'sparkbox', 'cloud', 'google', 'rbox', 'youtube'];
      const rightTabs = ['google', 'tongue', 'slides', 'slides'];

      function tab(icon, width, last) {
        return `<button aria-label="${icon}" class="${width} flex shrink-0 items-center justify-end gap-4 text-[#4d5156]">
          <svg class="size-8"><use href="#${icon}" /></svg>
          <span class="${last ? 'invisible' : ''} h-8 w-1 rounded bg-[#f7bb90]"></span>
        </button>`;
      }

      document.getElementById('tabs-left').innerHTML =
        wideTabs.map(icon => tab(icon, 'w-[70px]')).join('') +
        narrowTabs.map((icon, i) => tab(icon, 'w-[68px]', i === narrowTabs.length - 1)).join('');
      document.getElementById('tabs-right').innerHTML = rightTabs.map(icon => tab(icon, 'w-[68px]')).join('');
    </script>
  </body>
</html>
